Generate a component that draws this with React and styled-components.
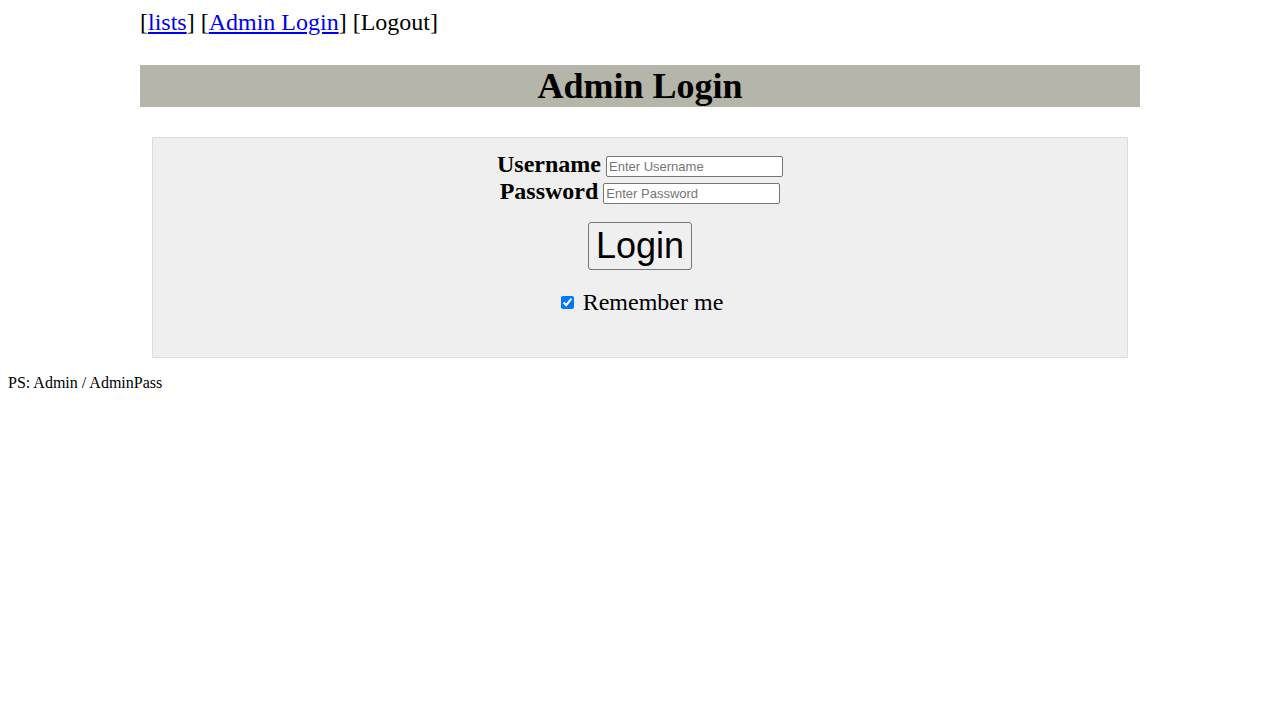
import styled, { createGlobalStyle } from "styled-components"

const GlobalStyle = createGlobalStyle`
    body{
        margin: 8px;
        font-family: "Liberation Serif", "Times New Roman", serif;
        background: #fff;
        color: #000;
    }
`

const Page = styled.div`
    width: 1000px;
    margin: 0 auto;
`

const Nav = styled.div`
    font-size: 24px;
    line-height: 28px;
    a{
        color: #0000ee;
        text-decoration: underline;
    }
`

const Title = styled.h1`
    margin: 29px 0 0;
    background-color: #b5b6a9;
    font-size: 36px;
    line-height: 42px;
    text-align: center;
    font-weight: bold;
`

const FormBox = styled.form`
    margin: 30px 12px 0;
    background-color: #efefef;
    border: 1px solid #dddddd;
    padding: 13px 0 41px;
    text-align: center;
`

const Row = styled.div`
    height: 27px;
    line-height: 27px;
    label{
        font-size: 24px;
        font-weight: bold;
    }
`

const TextInput = styled.input`
    width: 177px;
    height: 21px;
    box-sizing: border-box;
    font-family: "Liberation Sans", Arial, sans-serif;
    font-size: 13px;
    padding: 1px 2px;
    border: 1px solid #767676;
    border-radius: 2px;
    vertical-align: 1px;
    margin-left: 5px;
    background: #fff;
`

const LoginButton = styled.button`
    margin-top: 17px;
    height: 48px;
    width: 104px;
    font-family: "Liberation Sans", Arial, sans-serif;
    font-size: 36px;
    padding: 0;
    background: #efefef;
    border: 1px solid #767676;
    border-radius: 3px;
    color: #000;
`

const Remember = styled.div`
    margin-top: 18px;
    font-size: 24px;
    line-height: 28px;
    input{
        width: 13px;
        height: 13px;
        margin: 0 9px 0 4px;
        vertical-align: 1px;
        accent-color: #0075ff;
    }
`

const Footnote = styled.p`
    margin: 16px 0 0;
    font-size: 16px;
`

export default function App() {
    return (
        <>
            <GlobalStyle />
            <Page>
                <Nav>
                    [<a href="#">lists</a>] [<a href="#">Admin Login</a>] [Logout]
                </Nav>
                <Title>Admin Login</Title>
                <FormBox onSubmit={e => e.preventDefault()}>
                    <Row>
                        <label>Username</label>
                        <TextInput type="text" placeholder="Enter Username" />
                    </Row>
                    <Row>
                        <label>Password</label>
                        <TextInput type="password" placeholder="Enter Password" />
                    </Row>
                    <LoginButton type="submit">Login</LoginButton>
                    <Remember>
                        <input type="checkbox" defaultChecked />
                        Remember me
                    </Remember>
                </FormBox>
            </Page>
            <Footnote>PS: Admin / AdminPass</Footnote>
        </>
    )
}
